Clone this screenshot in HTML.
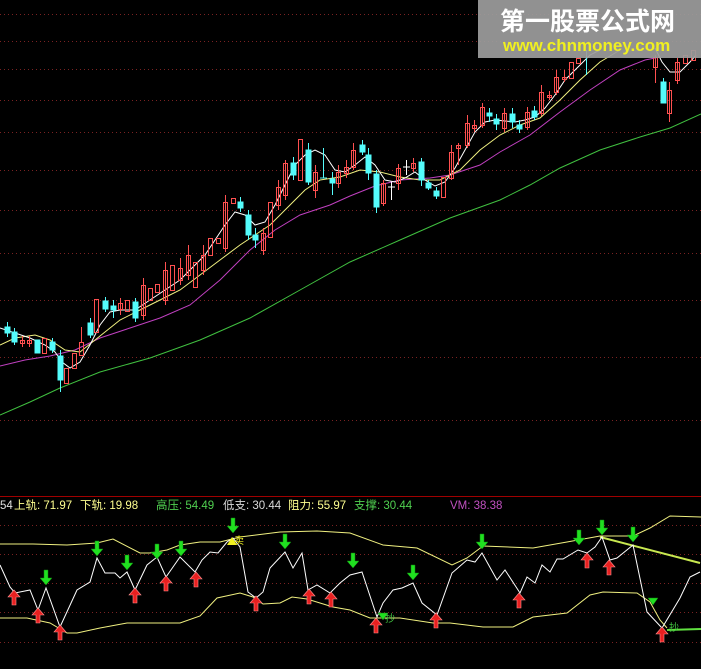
<!DOCTYPE html>
<html><head><meta charset="utf-8"><style>
html,body{margin:0;padding:0;background:#000;}
svg{display:block;}
text{font-family:"Liberation Sans","Noto Sans CJK SC",sans-serif;}
</style></head><body>
<svg width="701" height="669" viewBox="0 0 701 669" xmlns="http://www.w3.org/2000/svg">
<rect width="701" height="669" fill="#000"/>
<g stroke="#7a2222" stroke-width="1" stroke-dasharray="1,3">
<line x1="0" y1="14.5" x2="701" y2="14.5"/><line x1="0" y1="41.5" x2="701" y2="41.5"/>
<line x1="0" y1="69.5" x2="701" y2="69.5"/><line x1="0" y1="100.5" x2="701" y2="100.5"/>
<line x1="0" y1="132.5" x2="701" y2="132.5"/><line x1="0" y1="170.5" x2="701" y2="170.5"/>
<line x1="0" y1="210.5" x2="701" y2="210.5"/><line x1="0" y1="253.5" x2="701" y2="253.5"/>
<line x1="0" y1="300.5" x2="701" y2="300.5"/><line x1="0" y1="357.5" x2="701" y2="357.5"/>
<line x1="0" y1="420.5" x2="701" y2="420.5"/>
<line x1="0" y1="525.5" x2="701" y2="525.5"/><line x1="0" y1="554.5" x2="701" y2="554.5"/>
<line x1="0" y1="583.5" x2="701" y2="583.5"/><line x1="0" y1="612.5" x2="701" y2="612.5"/>
<line x1="0" y1="642.5" x2="701" y2="642.5"/>
</g>
<line x1="0" y1="496.5" x2="701" y2="496.5" stroke="#a00000"/>

<!-- MA lines -->
<polyline fill="none" stroke="#40c040" stroke-width="1" points="0,415 30,402 60,388 100,372 150,358 200,340 250,318 300,290 350,262 400,240 450,218 500,200 530,185 560,168 600,150 640,137 670,128 701,114"/>
<polyline fill="none" stroke="#c040c0" stroke-width="1" points="0,366 25,360 50,356 75,350 100,338 130,328 160,318 190,305 220,280 250,250 275,230 300,215 330,205 350,196 375,186 400,180 430,178 450,175 480,165 500,152 530,135 560,112 590,90 620,70 645,60 660,57"/>
<polyline fill="none" stroke="#f0f080" stroke-width="1" points="0,345 15,338 35,335 50,340 65,350 80,352 100,336 120,320 140,310 160,300 180,290 200,275 220,260 240,245 255,235 270,225 290,205 305,190 320,180 340,177 360,170 380,172 400,177 420,180 440,180 460,170 480,150 500,135 520,125 540,118 560,100 580,80 600,62 620,50"/>
<polyline fill="none" stroke="#ffffff" stroke-width="1" points="0,328 15,333 30,338 45,345 55,352 62,362 70,368 80,362 90,345 100,325 110,312 120,310 135,310 150,300 165,290 180,280 195,265 205,255 215,240 225,225 235,212 245,215 255,225 265,222 275,205 285,185 295,165 305,155 315,150 325,155 335,170 345,172 355,165 365,157 375,165 385,180 395,182 405,178 415,172 425,180 435,186 445,182 455,168 465,150 475,132 485,122 495,120 505,121 515,122 525,120 535,117 545,108 555,95 565,80 575,70 590,55 600,50"/>
<polyline fill="none" stroke="#ffffff" stroke-width="1" points="655,48 662,62 670,72 680,72 690,62 696,55"/>

<!-- candles -->
<g stroke-width="1">
<g stroke="#54fcfc" fill="#54fcfc">
<rect x="5" y="327" width="5" height="6"/><line x1="7.5" y1="322" x2="7.5" y2="337"/>
<rect x="12" y="332" width="5" height="10"/><line x1="14.5" y1="328" x2="14.5" y2="345"/>
<rect x="35" y="340" width="5" height="13"/>
<rect x="50" y="342" width="5" height="8"/><line x1="52.5" y1="338" x2="52.5" y2="353"/>
<rect x="58" y="356" width="5" height="24"/><line x1="60.5" y1="350" x2="60.5" y2="392"/>
<rect x="88" y="323" width="5" height="12"/><line x1="90.5" y1="318" x2="90.5" y2="338"/>
<rect x="103" y="301" width="5" height="8"/><line x1="105.5" y1="297" x2="105.5" y2="312"/>
<rect x="111" y="306" width="5" height="4"/><line x1="113.5" y1="300" x2="113.5" y2="318"/>
<rect x="133" y="302" width="5" height="16"/><line x1="135.5" y1="298" x2="135.5" y2="322"/>
<rect x="238" y="202" width="5" height="6"/><line x1="240.5" y1="197" x2="240.5" y2="212"/>
<rect x="246" y="215" width="5" height="20"/><line x1="248.5" y1="210" x2="248.5" y2="240"/>
<rect x="253" y="235" width="5" height="5"/><line x1="255.5" y1="228" x2="255.5" y2="248"/>
<rect x="291" y="163" width="5" height="12"/><line x1="293.5" y1="157" x2="293.5" y2="180"/>
<rect x="306" y="150" width="5" height="32"/><line x1="308.5" y1="143" x2="308.5" y2="185"/>
<line x1="323.5" y1="148" x2="323.5" y2="178"/><line x1="320" y1="178" x2="327" y2="178"/>
<rect x="330" y="179" width="5" height="4"/><line x1="332.5" y1="172" x2="332.5" y2="195"/>
<rect x="360" y="145" width="5" height="7"/><line x1="362.5" y1="140" x2="362.5" y2="155"/>
<rect x="366" y="155" width="5" height="18"/><line x1="368.5" y1="148" x2="368.5" y2="180"/>
<rect x="374" y="174" width="5" height="33"/><line x1="376.5" y1="170" x2="376.5" y2="213"/>
<rect x="419" y="162" width="5" height="18"/><line x1="421.5" y1="158" x2="421.5" y2="186"/>
<rect x="426" y="183" width="5" height="5"/><line x1="428.5" y1="180" x2="428.5" y2="190"/>
<rect x="434" y="191" width="5" height="5"/><line x1="436.5" y1="187" x2="436.5" y2="199"/>
<rect x="487" y="113" width="5" height="3"/><line x1="489.5" y1="108" x2="489.5" y2="122"/>
<rect x="494" y="119" width="5" height="5"/><line x1="496.5" y1="114" x2="496.5" y2="130"/>
<rect x="510" y="114" width="5" height="8"/><line x1="512.5" y1="108" x2="512.5" y2="128"/>
<rect x="517" y="125" width="5" height="4"/><line x1="519.5" y1="120" x2="519.5" y2="133"/>
<rect x="532" y="111" width="5" height="6"/><line x1="534.5" y1="106" x2="534.5" y2="120"/>
<line x1="586.5" y1="50" x2="586.5" y2="75"/>
<rect x="661" y="82" width="5" height="21"/><line x1="663.5" y1="78" x2="663.5" y2="103"/>
</g>
<g stroke="#ff5050" fill="none">
<rect x="20.5" y="340.5" width="4" height="3"/><line x1="22.5" y1="336" x2="22.5" y2="347"/>
<rect x="27.5" y="340.5" width="4" height="3"/><line x1="29.5" y1="336" x2="29.5" y2="347"/>
<rect x="42.5" y="338.5" width="4" height="15"/>
<rect x="64.5" y="368.5" width="4" height="15"/>
<rect x="72.5" y="353.5" width="4" height="15"/>
<rect x="79.5" y="342.5" width="4" height="13"/><line x1="81.5" y1="327" x2="81.5" y2="342"/>
<rect x="94.5" y="299.5" width="4" height="33"/>
<rect x="118.5" y="303.5" width="4" height="6"/><line x1="120.5" y1="298" x2="120.5" y2="315"/>
<rect x="125.5" y="300.5" width="4" height="11"/>
<rect x="141.5" y="285.5" width="4" height="30"/><line x1="143.5" y1="278" x2="143.5" y2="320"/>
<rect x="148.5" y="288.5" width="4" height="12"/>
<rect x="155.5" y="284.5" width="4" height="8"/>
<rect x="163.5" y="270.5" width="4" height="30"/><line x1="165.5" y1="262" x2="165.5" y2="305"/>
<rect x="170.5" y="265.5" width="4" height="25"/>
<rect x="178.5" y="268.5" width="4" height="12"/><line x1="180.5" y1="258" x2="180.5" y2="285"/>
<rect x="186.5" y="255.5" width="4" height="20"/><line x1="188.5" y1="245" x2="188.5" y2="280"/>
<rect x="193.5" y="262.5" width="4" height="25"/>
<rect x="201.5" y="255.5" width="4" height="15"/><line x1="203.5" y1="245" x2="203.5" y2="275"/>
<rect x="208.5" y="238.5" width="4" height="17"/>
<rect x="216.5" y="238.5" width="4" height="5"/>
<rect x="223.5" y="202.5" width="4" height="46"/><line x1="225.5" y1="195" x2="225.5" y2="252"/>
<rect x="231.5" y="198.5" width="4" height="5"/>
<rect x="261.5" y="233.5" width="4" height="17"/><line x1="263.5" y1="228" x2="263.5" y2="255"/>
<rect x="268.5" y="202.5" width="4" height="35"/>
<rect x="276.5" y="187.5" width="4" height="18"/><line x1="278.5" y1="180" x2="278.5" y2="210"/>
<rect x="283.5" y="163.5" width="4" height="32"/><line x1="285.5" y1="160" x2="285.5" y2="200"/>
<rect x="298.5" y="139.5" width="4" height="41"/>
<rect x="313.5" y="172.5" width="4" height="18"/><line x1="315.5" y1="165" x2="315.5" y2="198"/>
<rect x="336.5" y="172.5" width="4" height="11"/><line x1="338.5" y1="165" x2="338.5" y2="188"/>
<rect x="344.5" y="167.5" width="4" height="6"/><line x1="346.5" y1="160" x2="346.5" y2="178"/>
<rect x="351.5" y="150.5" width="4" height="17"/><line x1="353.5" y1="143" x2="353.5" y2="170"/>
<rect x="381.5" y="183.5" width="4" height="20"/><line x1="383.5" y1="180" x2="383.5" y2="206"/>
<rect x="396.5" y="168.5" width="4" height="15"/><line x1="398.5" y1="164" x2="398.5" y2="190"/>
<rect x="411.5" y="163.5" width="4" height="5"/><line x1="413.5" y1="158" x2="413.5" y2="172"/>
<rect x="441.5" y="177.5" width="4" height="20"/>
<rect x="449.5" y="152.5" width="4" height="26"/><line x1="451.5" y1="145" x2="451.5" y2="180"/>
<rect x="456.5" y="145.5" width="4" height="3"/><line x1="458.5" y1="143" x2="458.5" y2="165"/>
<rect x="465.5" y="123.5" width="4" height="22"/><line x1="467.5" y1="115" x2="467.5" y2="148"/>
<rect x="472.5" y="125.5" width="4" height="3"/><line x1="474.5" y1="120" x2="474.5" y2="132"/>
<rect x="480.5" y="107.5" width="4" height="18"/><line x1="482.5" y1="103" x2="482.5" y2="128"/>
<rect x="502.5" y="113.5" width="4" height="15"/><line x1="504.5" y1="108" x2="504.5" y2="132"/>
<rect x="525.5" y="112.5" width="4" height="15"/><line x1="527.5" y1="107" x2="527.5" y2="130"/>
<rect x="539.5" y="92.5" width="4" height="21"/><line x1="541.5" y1="85" x2="541.5" y2="116"/>
<rect x="547.5" y="95.5" width="4" height="2"/><line x1="549.5" y1="91" x2="549.5" y2="100"/>
<rect x="554.5" y="77.5" width="4" height="15"/><line x1="556.5" y1="70" x2="556.5" y2="95"/>
<rect x="562.5" y="77.5" width="4" height="2"/><line x1="564.5" y1="70" x2="564.5" y2="82"/>
<rect x="569.5" y="62.5" width="4" height="16"/>
<rect x="576.5" y="58.5" width="4" height="5"/>
<rect x="653.5" y="57.5" width="4" height="10"/><line x1="655.5" y1="55" x2="655.5" y2="83"/>
<rect x="667.5" y="90.5" width="4" height="23"/><line x1="669.5" y1="82" x2="669.5" y2="122"/>
<rect x="675.5" y="62.5" width="4" height="18"/><line x1="677.5" y1="58" x2="677.5" y2="84"/>
<rect x="683.5" y="55.5" width="4" height="8"/>
<rect x="691.5" y="50.5" width="4" height="10"/>
</g>
<g stroke="#ffffff"><line x1="388" y1="187" x2="395" y2="187"/><line x1="391.5" y1="182" x2="391.5" y2="200"/>
<line x1="403" y1="167" x2="410" y2="167"/><line x1="406.5" y1="160" x2="406.5" y2="175"/></g>
</g>

<!-- watermark -->
<rect x="478" y="0" width="223" height="58" fill="#9c9c9c" opacity="0.93"/>
<text x="500" y="30" font-size="25" font-weight="bold" fill="#ffffff" font-family="'Noto Sans CJK SC',sans-serif">第一股票公式网</text>
<text x="503" y="51" font-size="17" font-weight="bold" fill="#f0f020">www.chnmoney.com</text>

<!-- lower header -->
<text y="509" font-size="11.5">
<tspan x="0" fill="#e0e0e0">54</tspan>
<tspan x="14" fill="#ffff90">上轨: 71.97</tspan>
<tspan x="80" fill="#ffff90">下轨: 19.98</tspan>
<tspan x="156" fill="#50d050">高压: 54.49</tspan>
<tspan x="223" fill="#d8d8d8">低支: 30.44</tspan>
<tspan x="288" fill="#ffff90">阻力: 55.97</tspan>
<tspan x="354" fill="#50d050">支撑: 30.44</tspan>
<tspan x="450" fill="#c050c0">VM: 38.38</tspan>
</text>

<!-- lower panel lines -->
<polyline fill="none" stroke="#f0f080" points="0,544 33,544 67,545 97,543 113,539 140,553 150,553 167,550 180,545 200,542 220,542 240,537 280,532 317,531 350,533 383,545 417,548 452,565 467,558 483,546 533,548 567,542 600,536 633,536 650,528 670,516 701,517"/>
<polyline fill="none" stroke="#f0f080" points="0,618 27,618 50,623 67,633 77,633 100,628 127,623 180,623 200,616 217,598 240,593 253,597 263,604 280,603 292,597 307,599 333,607 350,610 370,618 400,618 433,623 450,623 483,627 513,627 533,617 567,613 590,595 603,592 637,593 650,602 660,620 667,628"/>
<polyline fill="none" stroke="#c8e850" stroke-width="2" points="600,537 700,563"/>
<polyline fill="none" stroke="#60e040" stroke-width="2" points="667,630 701,629"/>
<polyline fill="none" stroke="#ffffff" points="0,565 10,587 15,593 30,590 38,610 46,588 60,627 77,590 90,582 97,558 105,573 115,573 120,578 127,572 135,590 147,565 157,557 166,577 180,557 195,572 202,560 210,552 218,553 227,542 233,538 240,547 248,592 256,598 263,592 270,568 285,552 293,568 302,553 308,590 317,585 330,593 340,583 350,575 362,572 377,617 383,603 393,590 402,588 413,583 422,603 437,615 452,573 467,560 475,562 482,553 497,580 505,570 520,593 527,577 535,583 542,565 550,572 557,559 563,559 578,550 587,553 595,547 602,537 610,560 617,558 633,545 647,612 662,628 680,598 690,577 700,572"/>

<!-- arrows -->
<g fill="#20e020" stroke="#108010" stroke-width="0.5">
<path d="M-2,-15H2V-7H6L0,0L-6,-7H-2Z" transform="translate(46,585)"/>
<path d="M-2,-15H2V-7H6L0,0L-6,-7H-2Z" transform="translate(97,556)"/>
<path d="M-2,-15H2V-7H6L0,0L-6,-7H-2Z" transform="translate(127,570)"/>
<path d="M-2,-15H2V-7H6L0,0L-6,-7H-2Z" transform="translate(157,559)"/>
<path d="M-2,-15H2V-7H6L0,0L-6,-7H-2Z" transform="translate(181,556)"/>
<path d="M-2,-15H2V-7H6L0,0L-6,-7H-2Z" transform="translate(233,533)"/>
<path d="M-2,-15H2V-7H6L0,0L-6,-7H-2Z" transform="translate(285,549)"/>
<path d="M-2,-15H2V-7H6L0,0L-6,-7H-2Z" transform="translate(353,568)"/>
<path d="M-2,-15H2V-7H6L0,0L-6,-7H-2Z" transform="translate(413,580)"/>
<path d="M-2,-15H2V-7H6L0,0L-6,-7H-2Z" transform="translate(482,549)"/>
<path d="M-2,-15H2V-7H6L0,0L-6,-7H-2Z" transform="translate(579,545)"/>
<path d="M-2,-15H2V-7H6L0,0L-6,-7H-2Z" transform="translate(602,535)"/>
<path d="M-2,-15H2V-7H6L0,0L-6,-7H-2Z" transform="translate(633,542)"/>
<path d="M-5,-7H5L0,0Z" transform="translate(653,605)"/>
<path d="M-5,-7H5L0,0Z" transform="translate(383,620)"/>
</g>
<g fill="#e82020" stroke="#ff9090" stroke-width="0.6">
<path d="M0,0L6,7H2V15H-2V7H-6Z" transform="translate(14,590)"/>
<path d="M0,0L6,7H2V15H-2V7H-6Z" transform="translate(38,608)"/>
<path d="M0,0L6,7H2V15H-2V7H-6Z" transform="translate(60,625)"/>
<path d="M0,0L6,7H2V15H-2V7H-6Z" transform="translate(135,588)"/>
<path d="M0,0L6,7H2V15H-2V7H-6Z" transform="translate(166,576)"/>
<path d="M0,0L6,7H2V15H-2V7H-6Z" transform="translate(196,572)"/>
<path d="M0,0L6,7H2V15H-2V7H-6Z" transform="translate(256,596)"/>
<path d="M0,0L6,7H2V15H-2V7H-6Z" transform="translate(309,589)"/>
<path d="M0,0L6,7H2V15H-2V7H-6Z" transform="translate(331,592)"/>
<path d="M0,0L6,7H2V15H-2V7H-6Z" transform="translate(376,618)"/>
<path d="M0,0L6,7H2V15H-2V7H-6Z" transform="translate(436,613)"/>
<path d="M0,0L6,7H2V15H-2V7H-6Z" transform="translate(519,593)"/>
<path d="M0,0L6,7H2V15H-2V7H-6Z" transform="translate(587,553)"/>
<path d="M0,0L6,7H2V15H-2V7H-6Z" transform="translate(609,560)"/>
<path d="M0,0L6,7H2V15H-2V7H-6Z" transform="translate(662,627)"/>
</g>
<path d="M227,545L232,537L237,545Z" fill="#f0f020"/>
<text x="234" y="544" font-size="10" fill="#f0f020" font-family="'Noto Sans CJK SC',sans-serif">卖</text>
<text x="385" y="622" font-size="10" fill="#40c040" font-family="'Noto Sans CJK SC',sans-serif">抄</text>
<text x="669" y="631" font-size="10" fill="#40c040" font-family="'Noto Sans CJK SC',sans-serif">抄</text>
</svg>
</body></html>
